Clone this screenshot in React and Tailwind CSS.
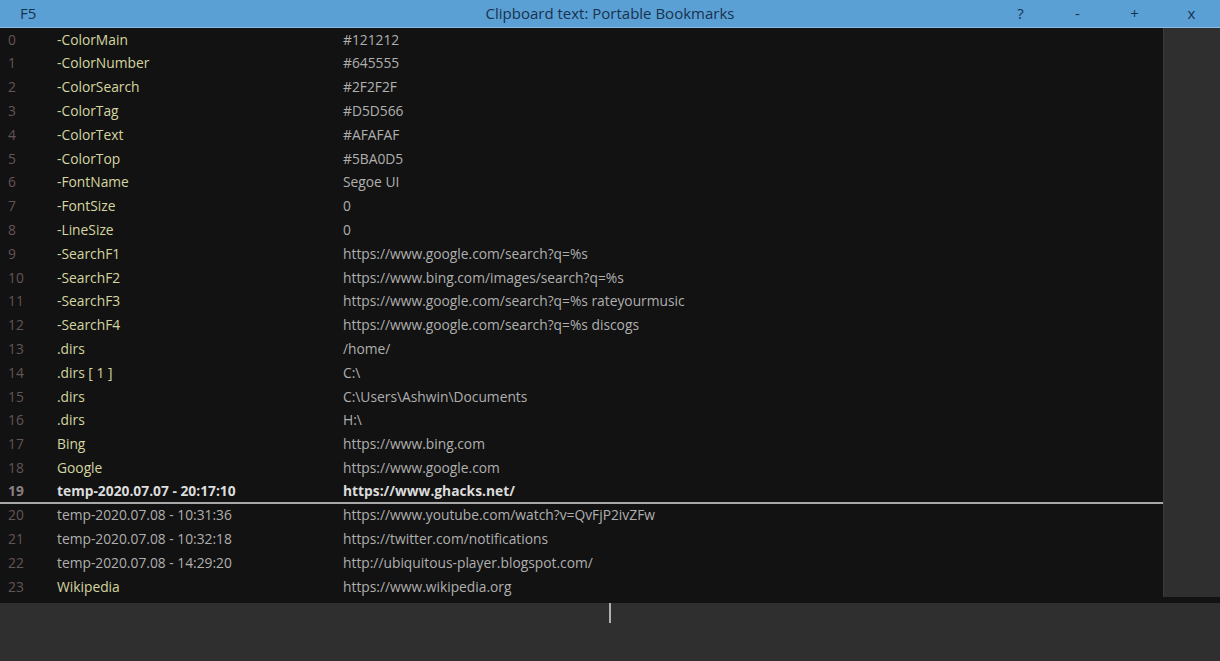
const rows = [
  ["-ColorMain", "#121212"],
  ["-ColorNumber", "#645555"],
  ["-ColorSearch", "#2F2F2F"],
  ["-ColorTag", "#D5D566"],
  ["-ColorText", "#AFAFAF"],
  ["-ColorTop", "#5BA0D5"],
  ["-FontName", "Segoe UI"],
  ["-FontSize", "0"],
  ["-LineSize", "0"],
  ["-SearchF1", "https://www.google.com/search?q=%s"],
  ["-SearchF2", "https://www.bing.com/images/search?q=%s"],
  ["-SearchF3", "https://www.google.com/search?q=%s rateyourmusic"],
  ["-SearchF4", "https://www.google.com/search?q=%s discogs"],
  [".dirs", "/home/"],
  [".dirs [ 1 ]", "C:\\"],
  [".dirs", "C:\\Users\\Ashwin\\Documents"],
  [".dirs", "H:\\"],
  ["Bing", "https://www.bing.com"],
  ["Google", "https://www.google.com"],
  ["temp-2020.07.07 - 20:17:10", "https://www.ghacks.net/"],
  ["temp-2020.07.08 - 10:31:36", "https://www.youtube.com/watch?v=QvFjP2ivZFw"],
  ["temp-2020.07.08 - 10:32:18", "https://twitter.com/notifications"],
  ["temp-2020.07.08 - 14:29:20", "http://ubiquitous-player.blogspot.com/"],
  ["Wikipedia", "https://www.wikipedia.org"],
];

const Row = ({ i, name, value }) => {
  const selected = i === 19;
  const temp = name.startsWith("temp");
  let nameColor = "text-[#D5D5A0]";
  if (temp) nameColor = "text-[#AFAFAF]";
  if (selected) nameColor = "text-[#DCDCDC]";
  return (
    <div
      className={
        "flex items-center h-[23.8px] " +
        (selected ? "border-b-2 border-[#A8A8A8] font-bold" : "")
      }
    >
      <span className={"w-[57px] pl-[8px] " + (selected ? "text-[#8a8080]" : "text-[#645555]")}>{i}</span>
      <span className={"w-[286px] " + nameColor}>{name}</span>
      <span className={selected ? "text-[#DCDCDC]" : "text-[#AFAFAF]"}>{value}</span>
    </div>
  );
};

export default function App() {
  return (
    <div className="w-[1220px] h-[661px] flex flex-col bg-[#2F2F2F] font-['Open_Sans',sans-serif] text-[13.8px] overflow-hidden">
      <div className="relative h-[28px] bg-[#5BA0D5] border-b border-[#8cbde3] flex items-center text-[#17324f] text-[15px]">
        <span className="w-[57px] pl-[20px]">F5</span>
        <span className="flex-1 text-center">Clipboard text: Portable Bookmarks</span>
        <div className="w-[57px]" />
        <div className="absolute right-0 top-0 h-[27px] flex items-center">
          <span className="w-[57px] text-center">?</span>
          <span className="w-[57px] text-center">-</span>
          <span className="w-[57px] text-center">+</span>
          <span className="w-[57px] text-center">x</span>
        </div>
      </div>
      <div className="flex h-[575px] bg-[#121212]">
        <div className="flex-1 flex flex-col">
          {rows.map((r, i) => (
            <Row key={i} i={i} name={r[0]} value={r[1]} />
          ))}
        </div>
        <div className="w-[57px] pb-[6px]">
          <div className="h-full bg-[#2F2F2F] border-l border-[#3a3a3a]" />
        </div>
      </div>
      <div className="flex-1 flex justify-center">
        <div className="w-[2px] h-[20px] bg-[#b0b0b0]" />
      </div>
    </div>
  );
}
